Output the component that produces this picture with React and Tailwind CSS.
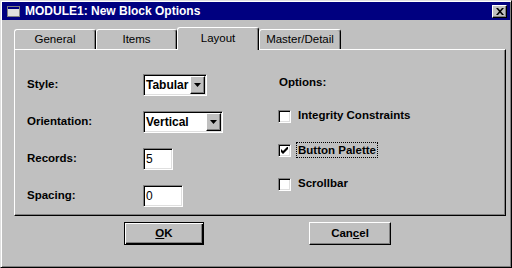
import React from "react"

/*____ bevel helpers ____*/
const raised = "border border-t-white border-l-white border-r-black border-b-black shadow-[inset_-1px_-1px_0_#808080]"
const sunken = "border border-t-[#808080] border-l-[#808080] border-b-white border-r-white shadow-[inset_1px_1px_0_#000,inset_-1px_-1px_0_#dfdfdf]"

function Tab({ label, active, w }) {
  if (active) {
    return (
      <div className={`relative z-10 -mb-px h-[23px] ${w} bg-[#c0c0c0] border-t border-l border-r border-t-white border-l-white border-r-black rounded-t-[3px] shadow-[inset_-1px_0_0_#808080] flex items-center justify-center pb-[1px]`}>
        {label}
      </div>
    )
  }
  return (
    <div className={`h-[20px] ${w} border-t border-l border-r border-t-white border-l-white border-r-black rounded-t-[3px] shadow-[inset_-1px_0_0_#808080] flex items-center justify-center`}>
      {label}
    </div>
  )
}

function Combo({ value, w }) {
  return (
    <div className={`h-[22px] ${w} bg-white ${sunken} flex items-center pl-[2px] pr-[1px]`}>
      <span className="flex-1 font-bold text-[12px]">{value}</span>
      <div className={`w-[15px] h-[18px] bg-[#c0c0c0] ${raised} flex items-center justify-center`}>
        <svg width="7" height="4" viewBox="0 0 7 4"><path d="M0 0h7L3.5 4z" fill="#000" /></svg>
      </div>
    </div>
  )
}

function Field({ value, w }) {
  return (
    <div className={`h-[22px] ${w} bg-white ${sunken} flex items-center pl-[2px] text-[12px] font-normal`}>
      {value}
    </div>
  )
}

function Check({ checked }) {
  return (
    <div className={`w-[13px] h-[13px] bg-white ${sunken} flex items-center justify-center`}>
      {checked && (
        <svg width="7" height="7" viewBox="0 0 7 7">
          <path d="M0 2v3l2 2 5-5V-1L2 4z" fill="#000" />
        </svg>
      )}
    </div>
  )
}

export default function App() {
  return (
    <div className="w-[512px] h-[268px] bg-[#c0c0c0] border border-t-[#dfdfdf] border-l-[#dfdfdf] border-r-black border-b-black shadow-[inset_1px_1px_0_#fff,inset_-1px_-1px_0_#808080] p-[1px] font-['Liberation_Sans',Arial,sans-serif] text-black flex flex-col">
      {/*____ title bar ____*/}
      <div className="h-[18px] bg-[#000080] flex items-center pl-[5px] pr-[3px]">
        <svg width="13" height="11" viewBox="0 0 13 11" className="mr-[5px]">
          <rect x="0" y="0" width="13" height="11" fill="#c0c0c0" />
          <rect x="0.5" y="0.5" width="12" height="10" fill="none" stroke="#808080" />
          <rect x="1" y="1" width="11" height="2" fill="#000080" />
          <rect x="1" y="3" width="11" height="7" fill="#dfdfdf" />
        </svg>
        <span className="flex-1 text-white font-bold text-[12px] leading-none">MODULE1: New Block Options</span>
        <div className={`w-[15px] h-[13px] bg-[#c0c0c0] ${raised} flex items-center justify-center`}>
          <svg width="8" height="7" viewBox="0 0 8 7">
            <path d="M0 0h2l2 2.3L6 0h2L5 3.5 8 7H6L4 4.7 2 7H0l3-3.5z" fill="#000" />
          </svg>
        </div>
      </div>

      {/*____ tabs ____*/}
      <div className="mt-[7px] ml-[12px] h-[22px] flex items-end text-[11.5px]">
        <Tab label="General" w="w-[82px]" />
        <Tab label="Items" w="w-[81px]" />
        <Tab label="Layout" w="w-[82px]" active />
        <Tab label="Master/Detail" w="w-[82px]" />
      </div>

      {/*____ panel ____*/}
      <div className={`ml-[12px] w-[492px] h-[167px] ${raised} flex pl-[12px] pt-[16px] text-[11.5px] font-bold`}>
        <div className="flex flex-col w-[251px]">
          <div className="h-[37px] flex items-center">
            <span className="w-[116px]">Style:</span>
            <Combo value="Tabular" w="w-[64px]" />
          </div>
          <div className="h-[37px] flex items-center">
            <span className="w-[116px]">Orientation:</span>
            <Combo value="Vertical" w="w-[80px]" />
          </div>
          <div className="h-[37px] flex items-center">
            <span className="w-[116px]">Records:</span>
            <Field value="5" w="w-[30px]" />
          </div>
          <div className="h-[37px] flex items-center">
            <span className="w-[116px]">Spacing:</span>
            <Field value="0" w="w-[40px]" />
          </div>
        </div>
        <div className="flex flex-col">
          <div className="h-[33px] flex items-center pl-[1px]">Options:</div>
          <div className="h-[34px] flex items-center gap-[7px]">
            <Check />
            <span>Integrity Constraints</span>
          </div>
          <div className="h-[34px] flex items-center gap-[5px]">
            <Check checked />
            <span className="border border-dotted border-black px-[1px] leading-[14px]">Button Palette</span>
          </div>
          <div className="h-[34px] flex items-center gap-[7px]">
            <Check />
            <span>Scrollbar</span>
          </div>
        </div>
      </div>

      {/*____ buttons ____*/}
      <div className="mt-[6px] flex justify-center gap-[105px] text-[11.5px] font-bold pl-[3px]">
        <button className="w-[80px] h-[23px] border border-black shadow-[inset_1px_1px_0_#fff,inset_-1px_-1px_0_#000,inset_-2px_-2px_0_#808080] flex items-center justify-center">
          <span><span className="underline">O</span>K</span>
        </button>
        <button className={`w-[82px] h-[23px] ${raised} flex items-center justify-center`}>
          <span>Can<span className="underline">c</span>el</span>
        </button>
      </div>
    </div>
  )
}
